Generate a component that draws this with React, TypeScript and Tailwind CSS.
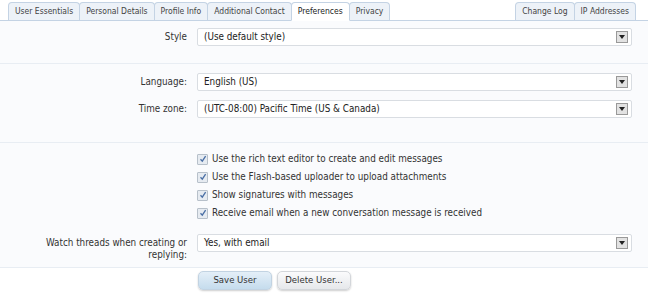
import React from 'react';

const font = 'font-["DejaVu_Sans_Condensed","DejaVu_Sans",sans-serif]';

const leftTabs = ['User Essentials', 'Personal Details', 'Profile Info', 'Additional Contact', 'Preferences', 'Privacy'];
const rightTabs = ['Change Log', 'IP Addresses'];

const Tab: React.FC<{ label: string; active?: boolean }> = ({ label, active }) => (
    <div
        className={`h-[18px] px-[6px] flex items-center border border-[#c4d3e4] -ml-px first:ml-0 rounded-t-[4px] text-[8.5px] ${
            active ? 'bg-white border-b-white text-[#222] -mb-px h-[19px] pb-px' : 'bg-[#edf2f8] border-b-0 text-[#444]'
        }`}
    >
        {label}
    </div>
);

const Select: React.FC<{ value: string }> = ({ value }) => (
    <div className="h-[18px] w-full bg-white border border-[#d9dde2] rounded-[2px] flex items-center justify-between pl-[6px] pr-[3px] text-[#222]">
        <span>{value}</span>
        <span className="w-[12px] h-[12px] bg-[#e2e2e2] border border-[#999] flex items-center justify-center">
            <svg width="6" height="4" viewBox="0 0 6 4">
                <path d="M0 0h6L3 4z" fill="#222" />
            </svg>
        </span>
    </div>
);

const Check: React.FC<{ label: string }> = ({ label }) => (
    <div className="h-[18px] flex items-center gap-[4px]">
        <span className="w-[11px] h-[11px] border border-[#b7c0ca] bg-[#e6ebf1] rounded-[1px] flex items-center justify-center">
            <svg width="8" height="8" viewBox="0 0 8 8">
                <path d="M1.5 4.2l1.8 2L6.6 1.2" stroke="#4a6fa5" strokeWidth="1.3" fill="none" />
            </svg>
        </span>
        <span className="text-[#333]">{label}</span>
    </div>
);

const Row: React.FC<{ label: React.ReactNode; children: React.ReactNode; className?: string }> = ({ label, children, className }) => (
    <div className={`grid grid-cols-[187px_1fr] gap-x-[10px] pr-[16px] ${className ?? ''}`}>
        <div className="text-right text-[#333] leading-[12px] pt-[3px]">{label}</div>
        <div>{children}</div>
    </div>
);

const App: React.FC = () => {
    return (
        <div className={`w-[648px] h-[300px] bg-white overflow-hidden text-[9.8px] ${font}`}>
            <div className="h-[21px] pt-[3px] px-[8px] flex justify-between items-end border-b border-[#c4d3e4]">
                <div className="flex items-end">
                    {leftTabs.map((t) => (
                        <Tab key={t} label={t} active={t === 'Preferences'} />
                    ))}
                </div>
                <div className="flex items-end mr-[4px]">
                    {rightTabs.map((t) => (
                        <Tab key={t} label={t} />
                    ))}
                </div>
            </div>

            <div className="bg-[#fafbfd] pt-[7px] h-[43px] border-b border-[#e8edf3]">
                <Row label="Style">
                    <Select value="(Use default style)" />
                </Row>
            </div>

            <div className="bg-[#fafbfd] pt-[9px] h-[79px] border-b border-[#e8edf3] flex flex-col gap-[9px]">
                <Row label="Language:">
                    <Select value="English (US)" />
                </Row>
                <Row label="Time zone:">
                    <Select value="(UTC-08:00) Pacific Time (US & Canada)" />
                </Row>
            </div>

            <div className="bg-[#fafbfd] pt-[7px] h-[125px] border-b border-[#e8edf3]">
                <Row label="">
                    <div className="flex flex-col">
                        <Check label="Use the rich text editor to create and edit messages" />
                        <Check label="Use the Flash-based uploader to upload attachments" />
                        <Check label="Show signatures with messages" />
                        <Check label="Receive email when a new conversation message is received" />
                    </div>
                </Row>
                <Row label={<>Watch threads when creating or<br />replying:</>} className="mt-[12px]">
                    <Select value="Yes, with email" />
                </Row>
            </div>

            <div className="pl-[198px] pt-[3px] flex gap-[5px]">
                <button className="w-[74px] h-[19px] rounded-[5px] bg-gradient-to-b from-[#e4eff8] to-[#c5dced] border border-[#c2d3e2] shadow-[0_1px_2px_rgba(0,0,0,0.2)] text-[#333] text-[9.5px]">
                    Save User
                </button>
                <button className="w-[74px] h-[19px] rounded-[5px] bg-gradient-to-b from-[#fbfbfc] to-[#e6e8eb] border border-[#d3d6da] shadow-[0_1px_2px_rgba(0,0,0,0.2)] text-[#333] text-[9.5px]">
                    Delete User...
                </button>
            </div>
        </div>
    );
};

export default App;
